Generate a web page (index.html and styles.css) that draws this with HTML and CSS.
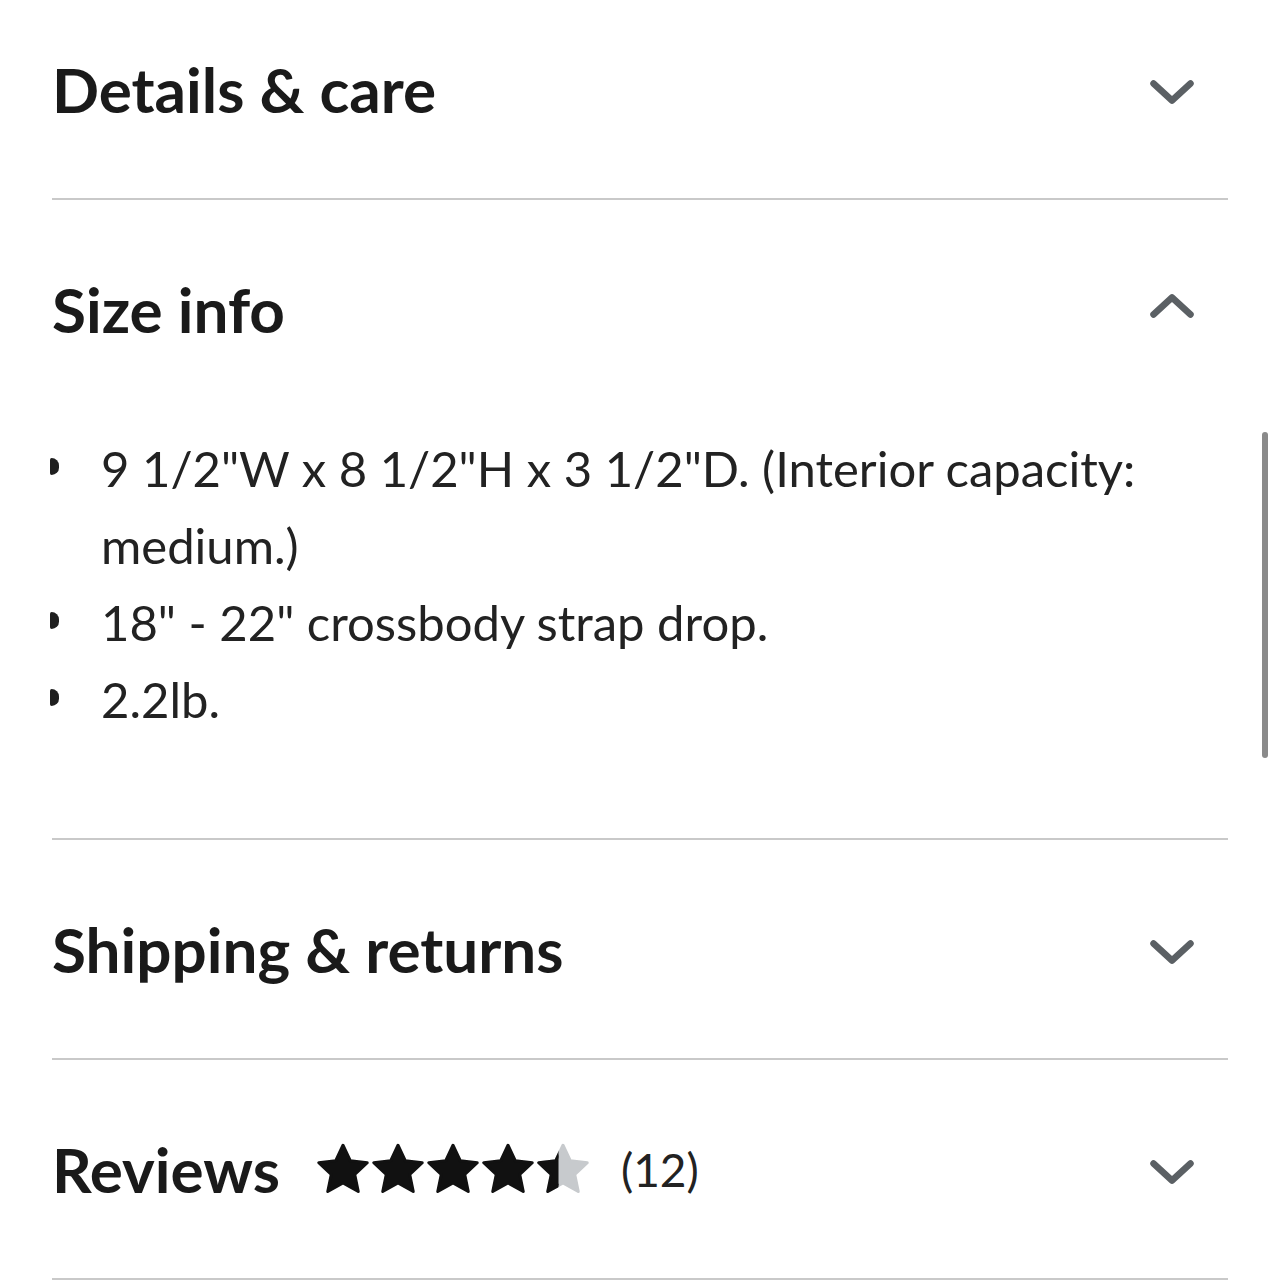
FILE: index.html
```html
<!doctype html>
<html lang="en">
    <head>
        <title>Product info</title>
        <meta charset="utf-8">
        <link rel="stylesheet" href="styles.css">
    </head>
    <body>
        <div class="panel">

            <!-- Details -->
            <section class="acc first">
                <div class="acc-head">
                    <h2>Details &amp; care</h2>
                    <svg class="chev" viewBox="0 0 48 36"><path d="M5.5 12.5 L24 29.5 L42.5 12.5"/></svg>
                </div>
            </section>

            <!-- Size info (open) -->
            <section class="acc open">
                <div class="acc-head">
                    <h2>Size info</h2>
                    <svg class="chev" viewBox="0 0 48 36"><path d="M5.5 23.5 L24 6.5 L42.5 23.5"/></svg>
                </div>
                <ul class="acc-body">
                    <li><span class="dot"></span><span>9 1/2"W x 8 1/2"H x 3 1/2"D. (Interior capacity: medium.)</span></li>
                    <li><span class="dot"></span><span>18" - 22" crossbody strap drop.</span></li>
                    <li><span class="dot"></span><span>2.2lb.</span></li>
                </ul>
            </section>

            <section class="acc">
                <div class="acc-head">
                    <h2>Shipping &amp; returns</h2>
                    <svg class="chev" viewBox="0 0 48 36"><path d="M5.5 12.5 L24 29.5 L42.5 12.5"/></svg>
                </div>
            </section>

            <section class="acc">
                <div class="acc-head">
                    <div class="title-row">
                        <h2>Reviews</h2>
                        <div class="stars">
                            <svg viewBox="0 0 24 24"><path d="M12 2.5l2.9 6.2 6.8.8-5 4.7 1.4 6.8L12 17.6 5.9 21l1.4-6.8-5-4.7 6.8-.8z"/></svg>
                            <svg viewBox="0 0 24 24"><path d="M12 2.5l2.9 6.2 6.8.8-5 4.7 1.4 6.8L12 17.6 5.9 21l1.4-6.8-5-4.7 6.8-.8z"/></svg>
                            <svg viewBox="0 0 24 24"><path d="M12 2.5l2.9 6.2 6.8.8-5 4.7 1.4 6.8L12 17.6 5.9 21l1.4-6.8-5-4.7 6.8-.8z"/></svg>
                            <svg viewBox="0 0 24 24"><path d="M12 2.5l2.9 6.2 6.8.8-5 4.7 1.4 6.8L12 17.6 5.9 21l1.4-6.8-5-4.7 6.8-.8z"/></svg>
                            <svg viewBox="0 0 24 24">
                                <defs><clipPath id="half"><rect x="0" y="0" width="10.2" height="24"/></clipPath></defs>
                                <path class="empty" d="M12 2.5l2.9 6.2 6.8.8-5 4.7 1.4 6.8L12 17.6 5.9 21l1.4-6.8-5-4.7 6.8-.8z"/>
                                <path clip-path="url(#half)" d="M12 2.5l2.9 6.2 6.8.8-5 4.7 1.4 6.8L12 17.6 5.9 21l1.4-6.8-5-4.7 6.8-.8z"/>
                            </svg>
                        </div>
                        <span class="count">(12)</span>
                    </div>
                    <svg class="chev" viewBox="0 0 48 36"><path d="M5.5 12.5 L24 29.5 L42.5 12.5"/></svg>
                </div>
            </section>

        </div>
        <div class="scrollbar"></div>
    </body>
</html>
```

FILE: styles.css
```css
body
{
    margin: 0;
    background: #fff;
    color: #1d1d1d;
    font-family: Lato, "Open Sans", sans-serif;
    overflow: hidden;
}
.panel
{
    margin: 0 52px;
}
.acc
{
    border-bottom: 2px solid #c9c9c9;
}
.acc.first
{
    margin-top: -20px;
}
.acc-head
{
    height: 218px;
    display: flex;
    align-items: center;
    justify-content: space-between;
    padding-right: 32px;
}
.acc h2
{
    margin: 0;
    font-size: 62px;
    font-weight: 700;
    color: #1a1a1a;
}
.chev
{
    width: 48px;
    height: 36px;
    fill: none;
    stroke: #5b6064;
    stroke-width: 6.5;
    stroke-linecap: round;
    stroke-linejoin: round;
}
.acc-body
{
    list-style: none;
    margin: 0;
    padding: 12px 0 100px 0;
    font-size: 49px;
    line-height: 77px;
    color: #222;
}
.acc-body li
{
    display: flex;
}
.dot
{
    flex: none;
    width: 9px;
    height: 17px;
    margin: 28px 42px 0 -2px;
    background: #1f1f1f;
    border-radius: 2px 9px 9px 2px;
}
.title-row
{
    display: flex;
    align-items: center;
}
.stars
{
    display: flex;
    margin-left: 33px;
}
.stars svg
{
    width: 60px;
    height: 60px;
    margin-right: -5px;
    fill: #111;
    stroke: #111;
    stroke-width: 1.2;
    stroke-linejoin: round;
}
.stars .empty
{
    fill: #c7cacd;
    stroke: #c7cacd;
}
.count
{
    margin-left: 33px;
    font-size: 46px;
    color: #222;
}
.scrollbar
{
    position: absolute;
    left: 1262px;
    top: 432px;
    width: 6px;
    height: 326px;
    border-radius: 3px;
    background: #8a8a8a;
}
```
